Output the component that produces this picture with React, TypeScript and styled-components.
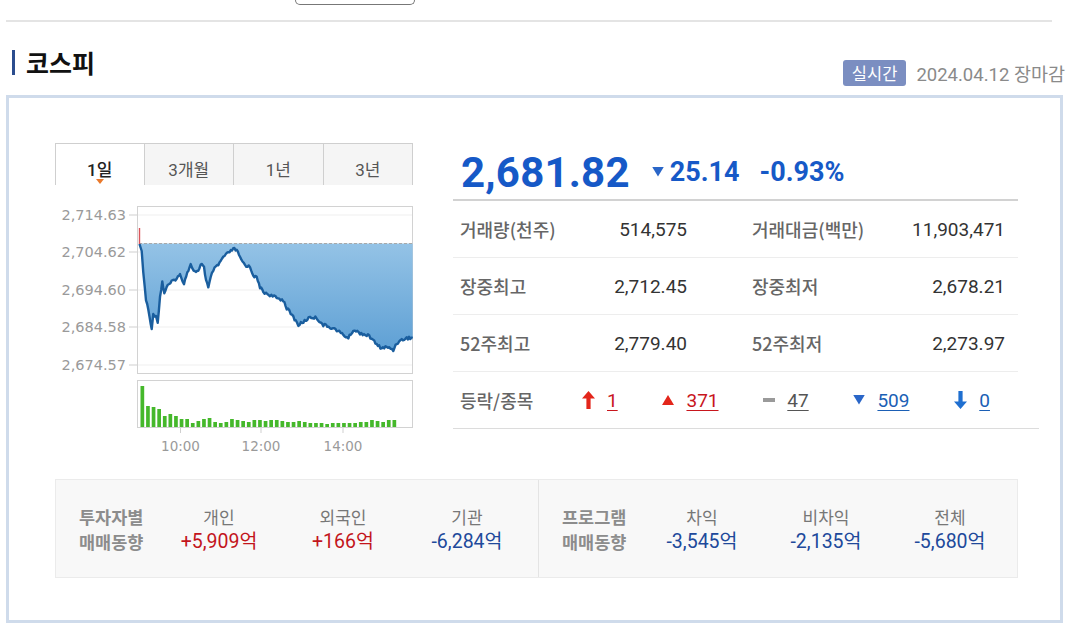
import React from 'react';
import styled, { createGlobalStyle } from 'styled-components';

const GlobalStyle = createGlobalStyle`
  html, body {
    margin: 0;
    padding: 0;
    background: #ffffff;
  }
  body {
    font-family: Roboto, "Noto Sans CJK KR", sans-serif;
    color: #333;
  }
`;

const Page = styled.div`
    width: 1080px;
    height: 626px;
    box-sizing: border-box;
    padding-left: 6px;
    overflow: hidden;
`;

const TopStrip = styled.div`
    height: 6px;
    padding-left: 289px;
`;

const CutButton = styled.div`
    width: 118px;
    height: 4px;
    border: 1.5px solid #777;
    border-top: none;
    border-radius: 0 0 5px 5px;
`;

const Divider = styled.div`
    margin-top: 14px;
    width: 1046px;
    height: 2px;
    background: #e4e4e4;
`;

const Header = styled.div`
    box-sizing: border-box;
    width: 1059px;
    height: 73px;
    padding-left: 6px;
    display: flex;
    justify-content: space-between;
    align-items: flex-start;
`;

const Title = styled.h2`
    margin: 27px 0 0;
    display: flex;
    align-items: center;
    gap: 11px;
    font-family: "Noto Sans CJK KR", sans-serif;
    font-size: 25px;
    font-weight: 700;
    line-height: 26px;
    color: #111;

    &::before {
        content: '';
        width: 3px;
        height: 25px;
        background: #2b4d8e;
    }
`;

const Meta = styled.div`
    margin-top: 38px;
    display: flex;
    align-items: center;
    gap: 10px;
`;

const Badge = styled.span`
    display: inline-block;
    height: 26px;
    line-height: 26px;
    padding: 0 9px;
    border-radius: 3px;
    background: #7b8ec1;
    color: #fff;
    font-family: "Noto Sans CJK KR", sans-serif;
    font-size: 16.5px;
`;

const DateText = styled.span`
    font-size: 18.5px;
    color: #8a8a8a;
`;

const Board = styled.div`
    box-sizing: border-box;
    width: 1057px;
    height: 528px;
    border: 3px solid #cfdbeb;
    padding: 45px 0 0 46px;
`;

const TopSection = styled.div`
    display: flex;
    gap: 40px;
`;

const ChartColumn = styled.div`
    width: 358px;
`;

const Tabs = styled.div`
    display: grid;
    grid-template-columns: repeat(4, 1fr);
    height: 42px;
`;

const Tab = styled.div<{ $active?: boolean }>`
    position: relative;
    box-sizing: border-box;
    border: 1px solid #cfcfcf;
    border-bottom: none;
    & + & { border-left: none; }
    background: ${p => (p.$active ? '#fff' : '#f5f5f5')};
    color: ${p => (p.$active ? '#222' : '#555')};
    font-size: 17px;
    font-weight: ${p => (p.$active ? 500 : 400)};
    text-align: center;
    padding-top: 15px;
    line-height: 22px;

    &::after {
        content: '';
        display: ${p => (p.$active ? 'block' : 'none')};
        position: absolute;
        left: 50%;
        bottom: 1px;
        margin-left: -4px;
        border-left: 4px solid transparent;
        border-right: 4px solid transparent;
        border-top: 5px solid #ea7a2c;
    }
`;

const ChartSvg = styled.svg`
    display: block;
`;

const InfoColumn = styled.div`
    width: 565px;
`;

const PriceRow = styled.div`
    box-sizing: border-box;
    height: 58px;
    border-bottom: 2px solid #d2d2d2;
    padding: 2px 0 0 8px;
    display: flex;
    align-items: center;
    color: #1659c7;
    font-weight: 700;
`;

const BigPrice = styled.span`
    font-size: 42px;
    letter-spacing: 0.2px;
`;

const Change = styled.span`
    margin-left: 22px;
    display: flex;
    align-items: center;
    gap: 6px;
    font-size: 27px;
`;

const Rate = styled.span`
    margin-left: 20px;
    font-size: 27px;
`;

const StatRow = styled.div<{ $last?: boolean }>`
    box-sizing: border-box;
    height: 57px;
    padding-left: 7px;
    display: grid;
    grid-template-columns: 115px 112px 205px 113px;
    align-items: center;
    border-bottom: 1px solid ${p => (p.$last ? '#dcdcdc' : '#ededed')};
    margin-right: ${p => (p.$last ? '-21px' : '0')};
`;

const BreadthRow = styled(StatRow)`
    grid-template-columns: 122px 408px;
`;

const Label = styled.span<{ $indent?: boolean }>`
    font-family: "Noto Sans CJK KR", sans-serif;
    font-size: 18px;
    font-weight: 500;
    color: #666;
    padding-left: ${p => (p.$indent ? '65px' : '0')};
`;

const Value = styled.span`
    font-size: 19px;
    color: #333;
    text-align: right;
`;

const Breadth = styled.div`
    display: flex;
    justify-content: space-between;
    align-items: center;
`;

const BreadthItem = styled.span`
    display: flex;
    align-items: center;
    gap: 12px;
`;

const Count = styled.span<{ $tone: 'up' | 'flat' | 'down' }>`
    font-size: 19px;
    text-decoration: underline;
    text-underline-offset: 3px;
    color: ${p => (p.$tone === 'up' ? '#c8161d' : p.$tone === 'down' ? '#1b5fb5' : '#555')};
`;

const FlowBox = styled.div`
    margin-top: 19px;
    box-sizing: border-box;
    width: 963px;
    height: 99px;
    background: #f8f8f8;
    border: 1px solid #ebebeb;
    display: grid;
    grid-template-columns: 482px 1fr;
`;

const FlowGroup = styled.div<{ $divider?: boolean }>`
    display: grid;
    grid-template-columns: 78px repeat(3, 124px);
    align-items: center;
    padding-left: 23px;
    border-left: ${p => (p.$divider ? '1px solid #e4e4e4' : 'none')};
`;

const FlowLabel = styled.div`
    font-family: "Noto Sans CJK KR", sans-serif;
    font-weight: 700;
    font-size: 17.5px;
    line-height: 25px;
    color: #8c8c8c;
`;

const FlowCell = styled.div`
    text-align: center;
    line-height: 25px;
`;

const FlowTitle = styled.div`
    font-family: "Noto Sans CJK KR", sans-serif;
    font-size: 17px;
    color: #777;
`;

const FlowValue = styled.div<{ $tone: 'up' | 'down' }>`
    font-size: 19.5px;
    color: ${p => (p.$tone === 'up' ? '#c3151c' : '#20499b')};
`;

// chart data, page coordinates (svg viewBox uses the same)
const KEY: [number, number][] = [
    [139.5, 244], [141.7, 251], [143.3, 273], [146, 300], [148.3, 310], [151.7, 328],
    [153.3, 315], [156, 315], [157.7, 323], [160, 297], [162.3, 282], [164.3, 293],
    [166.7, 287], [171.7, 282], [176.7, 278], [180, 275], [184, 283], [187.3, 272],
    [190.7, 265], [195, 272], [198.3, 272], [201.7, 263], [204, 267], [206, 280],
    [208.3, 288], [210.7, 278], [213.3, 270], [218.3, 265], [223.3, 257], [228.3, 253],
    [233.3, 249], [236.7, 250], [240, 258], [245, 265], [250, 267], [253.3, 275],
    [256.7, 278], [260, 287], [263.3, 292], [270, 295], [276.7, 298], [283.3, 300],
    [286.7, 308], [293.3, 317], [298.3, 325], [303.3, 322], [310, 317], [316.7, 318],
    [323.3, 325], [330, 327], [336.7, 330], [343.3, 335], [348.3, 338], [353.3, 330],
    [360, 333], [366.7, 335], [371.7, 338], [376.7, 345], [381.7, 348], [386.7, 347],
    [393.3, 350], [396.7, 343], [401.7, 340], [406.7, 338], [412.7, 338],
];

const VOLUMES = [41, 21, 20, 18, 11, 13, 11, 8, 8, 4, 6, 8, 9, 5, 4, 5, 8, 7, 6, 5, 7, 7, 6,
    7, 7, 6, 5, 5, 6, 5, 4, 4, 4, 3, 4, 4, 4, 4, 4, 5, 5, 7, 6, 5, 7, 7];

const Y_TICKS = [
    { y: 215, label: '2,714.63' },
    { y: 252, label: '2,704.62' },
    { y: 290, label: '2,694.60' },
    { y: 327, label: '2,684.58' },
    { y: 365, label: '2,674.57' },
];

const X_TICKS = [
    { x: 180.5, label: '10:00' },
    { x: 261, label: '12:00' },
    { x: 343, label: '14:00' },
];

function buildLine(): [number, number][] {
    const pts: [number, number][] = [];
    for (let i = 0; i < KEY.length - 1; i++) {
        const [x0, y0] = KEY[i];
        const [x1, y1] = KEY[i + 1];
        const steps = Math.max(1, Math.round((x1 - x0) / 1.3));
        for (let s = 0; s < steps; s++) {
            const t = s / steps;
            const n = Math.sin((pts.length + 1) * 12.9898) * 43758.5453;
            const jitter = i < 2 ? 0 : (n - Math.floor(n) - 0.5) * 3;
            pts.push([x0 + (x1 - x0) * t, y0 + (y1 - y0) * t + jitter]);
        }
    }
    pts.push(KEY[KEY.length - 1]);
    return pts;
}

const PriceChart: React.FC = () => {
    const pts = React.useMemo(buildLine, []);
    const line = pts.map(([x, y], i) => `${i ? 'L' : 'M'}${x.toFixed(1)} ${y.toFixed(1)}`).join(' ');
    const area = `${line} L412.7 243.5 L139.5 243.5 Z`;

    return (
        <ChartSvg width={358} height={275} viewBox="55 185 358 275">
            <defs>
                <linearGradient id="areaFill" gradientUnits="userSpaceOnUse" x1="0" y1="243" x2="0" y2="360">
                    <stop offset="0" stopColor="#94c3e6" />
                    <stop offset="1" stopColor="#5a9dd3" />
                </linearGradient>
            </defs>
            <rect x={137.5} y={206.5} width={275} height={167} fill="#fff" stroke="#d2d2d2" />
            {Y_TICKS.map(t => (
                <g key={t.label}>
                    <line x1={138} x2={412} y1={t.y} y2={t.y} stroke="#efefef" />
                    <line x1={129} x2={137} y1={t.y} y2={t.y} stroke="#cfcfcf" />
                    <text x={126} y={t.y + 5} textAnchor="end" fontFamily="'DejaVu Sans', sans-serif" fontSize={14.5} fill="#9a9a9a">
                        {t.label}
                    </text>
                </g>
            ))}
            <path d={area} fill="url(#areaFill)" />
            <line x1={139} x2={412} y1={243.5} y2={243.5} stroke="#a9a9a9" strokeDasharray="3 2" />
            <line x1={139.5} x2={139.5} y1={228} y2={244} stroke="#d9545a" strokeWidth={1.4} />
            <path d={line} fill="none" stroke="#1a5e9e" strokeWidth={2.4} strokeLinejoin="round" />

            <rect x={137.5} y={380.5} width={275} height={47} fill="#fff" stroke="#d2d2d2" />
            {VOLUMES.map((h, i) => (
                <rect key={i} x={140.5 + i * 5.6} y={427 - h} width={3.7} height={h} fill="#45b82b" />
            ))}
            {X_TICKS.map(t => (
                <g key={t.label}>
                    <line x1={t.x} x2={t.x} y1={428} y2={433} stroke="#cfcfcf" />
                    <text x={t.x} y={451} textAnchor="middle" fontFamily="'DejaVu Sans', sans-serif" fontSize={13.5} fill="#9a9a9a">
                        {t.label}
                    </text>
                </g>
            ))}
        </ChartSvg>
    );
};

const UpArrow = () => (
    <svg width="13" height="18" viewBox="0 0 13 18"><path d="M6.5 0 L13 7.5 H8.6 V18 H4.4 V7.5 H0 Z" fill="#e3261b" /></svg>
);
const DownArrow = () => (
    <svg width="13" height="18" viewBox="0 0 13 18"><path d="M6.5 18 L0 10.5 H4.4 V0 H8.6 V10.5 H13 Z" fill="#1f6fd0" /></svg>
);
const UpTri = () => (
    <svg width="12" height="10" viewBox="0 0 12 10"><path d="M6 0 L12 10 H0 Z" fill="#e3261b" /></svg>
);
const DownTri = ({ size = 12 }: { size?: number }) => (
    <svg width={size} height={size * 0.8} viewBox="0 0 12 10"><path d="M0 0 H12 L6 10 Z" fill="#2a66c8" /></svg>
);
const Dash = () => (
    <svg width="12" height="4" viewBox="0 0 12 4"><rect width="12" height="4" fill="#9a9a9a" /></svg>
);

const STATS = [
    ['거래량(천주)', '514,575', '거래대금(백만)', '11,903,471'],
    ['장중최고', '2,712.45', '장중최저', '2,678.21'],
    ['52주최고', '2,779.40', '52주최저', '2,273.97'],
];

const INVESTORS = [
    { title: '개인', value: '+5,909억', tone: 'up' as const },
    { title: '외국인', value: '+166억', tone: 'up' as const },
    { title: '기관', value: '-6,284억', tone: 'down' as const },
];

const PROGRAM = [
    { title: '차익', value: '-3,545억', tone: 'down' as const },
    { title: '비차익', value: '-2,135억', tone: 'down' as const },
    { title: '전체', value: '-5,680억', tone: 'down' as const },
];

const App: React.FC = () => {
    return (
        <>
            <GlobalStyle />
            <Page>
                <TopStrip><CutButton /></TopStrip>
                <Divider />
                <Header>
                    <Title>코스피</Title>
                    <Meta>
                        <Badge>실시간</Badge>
                        <DateText>2024.04.12 장마감</DateText>
                    </Meta>
                </Header>
                <Board>
                    <TopSection>
                        <ChartColumn>
                            <Tabs>
                                <Tab $active>1일</Tab>
                                <Tab>3개월</Tab>
                                <Tab>1년</Tab>
                                <Tab>3년</Tab>
                            </Tabs>
                            <PriceChart />
                        </ChartColumn>
                        <InfoColumn>
                            <PriceRow>
                                <BigPrice>2,681.82</BigPrice>
                                <Change><DownTri size={12} />25.14</Change>
                                <Rate>-0.93%</Rate>
                            </PriceRow>
                            {STATS.map(row => (
                                <StatRow key={row[0]}>
                                    <Label>{row[0]}</Label>
                                    <Value>{row[1]}</Value>
                                    <Label $indent>{row[2]}</Label>
                                    <Value>{row[3]}</Value>
                                </StatRow>
                            ))}
                            <BreadthRow $last>
                                <Label>등락/종목</Label>
                                <Breadth>
                                    <BreadthItem><UpArrow /><Count $tone="up">1</Count></BreadthItem>
                                    <BreadthItem><UpTri /><Count $tone="up">371</Count></BreadthItem>
                                    <BreadthItem><Dash /><Count $tone="flat">47</Count></BreadthItem>
                                    <BreadthItem><DownTri /><Count $tone="down">509</Count></BreadthItem>
                                    <BreadthItem><DownArrow /><Count $tone="down">0</Count></BreadthItem>
                                </Breadth>
                            </BreadthRow>
                        </InfoColumn>
                    </TopSection>
                    <FlowBox>
                        <FlowGroup>
                            <FlowLabel>투자자별<br />매매동향</FlowLabel>
                            {INVESTORS.map(c => (
                                <FlowCell key={c.title}>
                                    <FlowTitle>{c.title}</FlowTitle>
                                    <FlowValue $tone={c.tone}>{c.value}</FlowValue>
                                </FlowCell>
                            ))}
                        </FlowGroup>
                        <FlowGroup $divider>
                            <FlowLabel>프로그램<br />매매동향</FlowLabel>
                            {PROGRAM.map(c => (
                                <FlowCell key={c.title}>
                                    <FlowTitle>{c.title}</FlowTitle>
                                    <FlowValue $tone={c.tone}>{c.value}</FlowValue>
                                </FlowCell>
                            ))}
                        </FlowGroup>
                    </FlowBox>
                </Board>
            </Page>
        </>
    );
};

export default App;
